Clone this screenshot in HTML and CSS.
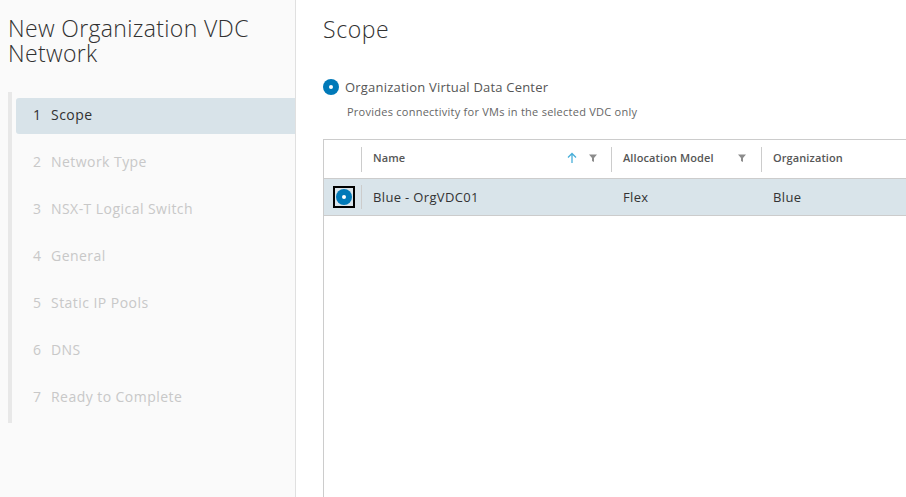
FILE: index.html
```html
<!DOCTYPE html>
<html>
<head>
<meta charset="utf-8">
<link rel="stylesheet" href="styles.css">
</head>
<body>
<div class="wizard">
  <aside class="sidebar">
    <h1 class="wiz-title">New Organization VDC Network</h1>
    <nav class="steps">
      <div class="step active"><span class="num">1</span><span>Scope</span></div>
      <div class="step"><span class="num">2</span><span>Network Type</span></div>
      <div class="step"><span class="num">3</span><span>NSX-T Logical Switch</span></div>
      <div class="step"><span class="num">4</span><span>General</span></div>
      <div class="step"><span class="num">5</span><span>Static IP Pools</span></div>
      <div class="step"><span class="num">6</span><span>DNS</span></div>
      <div class="step"><span class="num">7</span><span>Ready to Complete</span></div>
    </nav>
  </aside>
  <main class="content">
    <h2 class="page-title">Scope</h2>
    <div class="radio-opt">
      <span class="radio"></span>
      <span class="radio-label">Organization Virtual Data Center</span>
    </div>
    <div class="helper">Provides connectivity for VMs in the selected VDC only</div>
    <div class="grid">
      <div class="grid-head">
        <div class="cell c-sel"></div>
        <div class="cell c-name">
          <span class="sep"></span>
          <span class="hlabel">Name</span>
          <span class="icons">
            <svg class="sort" width="12" height="12" viewBox="0 0 12 12"><path d="M6 1.5V11M2 5.5L6 1.5L10 5.5" fill="none" stroke="#49afd9" stroke-width="1.3"/></svg>
            <svg class="filter" width="10" height="10" viewBox="0 0 10 10"><path d="M1 1.5H9L6 5V9L4 8V5Z" fill="#8c8c8c"/></svg>
          </span>
        </div>
        <div class="cell c-alloc">
          <span class="sep"></span>
          <span class="hlabel">Allocation Model</span>
          <span class="icons">
            <svg class="filter" width="10" height="10" viewBox="0 0 10 10"><path d="M1 1.5H9L6 5V9L4 8V5Z" fill="#8c8c8c"/></svg>
          </span>
        </div>
        <div class="cell c-org">
          <span class="sep"></span>
          <span class="hlabel">Organization</span>
        </div>
      </div>
      <div class="grid-row selected">
        <div class="cell c-sel"><span class="focus"><span class="radio"></span></span></div>
        <div class="cell c-name"><span class="sep"></span>Blue - OrgVDC01</div>
        <div class="cell c-alloc">Flex</div>
        <div class="cell c-org">Blue</div>
      </div>
    </div>
  </main>
</div>
</body>
</html>
```
FILE: styles.css
```css
* { box-sizing: border-box; }
html, body { margin: 0; padding: 0; height: 100%; }
body {
  font-family: "Open Sans", "Noto Sans", sans-serif;
  color: #333;
  background: #fff;
  overflow: hidden;
}
.wizard {
  display: flex;
  height: 497px;
}
.sidebar {
  width: 296px;
  flex: none;
  background: #fafafa;
  border-right: 1px solid #e0e0e0;
  padding: 16px 0 0 8px;
}
.wiz-title {
  margin: 0;
  font-size: 23px;
  font-weight: 300;
  line-height: 25px;
  letter-spacing: 0.35px;
  color: #313131;
}
.steps {
  margin-top: 26px;
  border-left: 4px solid #e8e8e8;
  padding: 6px 0 7px 4px;
  display: flex;
  flex-direction: column;
  gap: 11px;
}
.step {
  height: 36px;
  display: flex;
  align-items: center;
  padding: 0 0 3px 17px;
  font-size: 14px;
  letter-spacing: 0.45px;
  color: #c8c8c8;
  border-radius: 3px 0 0 3px;
}
.step .num { width: 18px; }
.step.active {
  background: #d8e3e9;
  color: #313131;
}
.content {
  flex: 1;
  padding: 14px 0 0 27px;
  min-width: 0;
  display: flex;
  flex-direction: column;
}
.page-title {
  margin: 0;
  font-size: 23px;
  font-weight: 300;
  line-height: 30px;
  letter-spacing: 0.6px;
  color: #313131;
}
.radio-opt {
  margin-top: 34px;
  display: flex;
  align-items: center;
  height: 18px;
}
.radio {
  width: 16px;
  height: 16px;
  border-radius: 50%;
  background: #0079b8;
  display: inline-block;
  position: relative;
  flex: none;
}
.radio::after {
  content: "";
  position: absolute;
  left: 6px;
  top: 6px;
  width: 4px;
  height: 4px;
  border-radius: 50%;
  background: #fff;
}
.radio-label {
  margin-left: 6px;
  font-size: 13px;
  letter-spacing: 0.2px;
  color: #565656;
}
.helper {
  margin-top: 8px;
  margin-left: 24px;
  font-size: 11px;
  letter-spacing: 0.25px;
  color: #666;
}
.grid {
  margin-top: 20px;
  border: 1px solid #ccc;
  border-right: none;
  border-bottom: none;
  flex: 1;
}
.grid-head, .grid-row {
  display: flex;
  border-bottom: 1px solid #ccc;
}
.grid-head { height: 39px; }
.grid-row { height: 37px; }
.grid-row.selected { background: #d9e4ea; }
.cell {
  position: relative;
  display: flex;
  align-items: center;
  padding-left: 12px;
  font-size: 13px;
  letter-spacing: 0.35px;
  color: #333;
}
.grid-head .cell { padding-bottom: 3px; }
.grid-row .cell { padding-bottom: 1px; }
.grid-head .icons { margin-top: 1px; }
.c-sel { width: 37px; padding-left: 0; justify-content: center; }
.grid-row .c-sel { padding-bottom: 0; }
.c-name { width: 250px; }
.c-alloc { width: 150px; }
.c-org { flex: 1; }
.grid-head .sep {
  position: absolute;
  left: 0;
  top: 7px;
  bottom: 6px;
  border-left: 1px solid #ccc;
}
.grid-row .sep {
  position: absolute;
  left: 0;
  top: 6px;
  bottom: 6px;
  border-left: 1px solid #ccc;
}
.hlabel {
  font-size: 11px;
  font-weight: 600;
  letter-spacing: 0.1px;
  color: #565656;
}
.icons {
  margin-left: auto;
  margin-right: 13px;
  display: flex;
  align-items: center;
  gap: 10px;
}
.c-alloc .icons { margin-right: 14px; }
.focus {
  display: inline-flex;
  width: 22px;
  height: 22px;
  border: 2px solid #000;
  align-items: center;
  justify-content: center;
  margin-left: 3px;
  margin-top: -1px;
}
```
